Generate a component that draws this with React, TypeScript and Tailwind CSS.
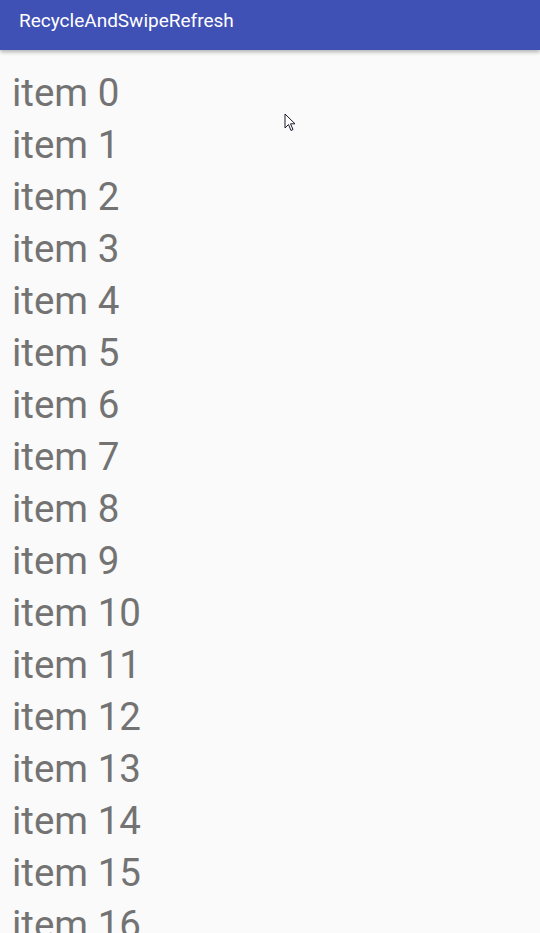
import React from "react";

export default function App() {
  const items = Array.from({ length: 17 }, (_, i) => i);
  return (
    <div className="relative w-[540px] h-[933px] overflow-hidden bg-[#fafafa]" style={{ fontFamily: "Roboto, sans-serif" }}>
      <div className="relative z-10 h-[50px] bg-[#3f51b5] flex items-center pl-[19px] shadow-[0_2px_4px_rgba(0,0,0,0.3)]">
        <span className="text-white text-[19px] leading-none -mt-[10px]">RecycleAndSwipeRefresh</span>
      </div>
      <div className="pt-[17px] pl-[12px]">
        {items.map((i) => (
          <div key={i} className="h-[52px] leading-[52px] text-[38.5px] text-[#737373] whitespace-nowrap">
            item {i}
          </div>
        ))}
      </div>
      <svg className="absolute left-[284px] top-[113px]" width="14" height="20" viewBox="0 0 14 20">
        <path d="M1 1 L1 15 L4.5 11.5 L7 17.5 L9 16.5 L6.5 10.8 L11 10.8 Z" fill="#fff" stroke="#1a1a2e" strokeWidth="1" strokeLinejoin="round" />
      </svg>
    </div>
  );
}
